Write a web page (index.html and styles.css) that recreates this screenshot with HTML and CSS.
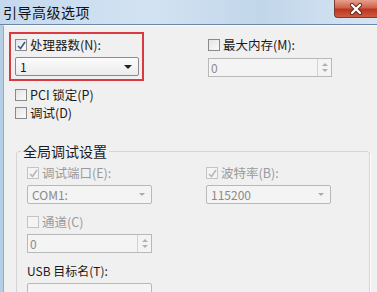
FILE: index.html
```html
<!DOCTYPE html>
<html>
<head>
<meta charset="utf-8">
<link rel="stylesheet" href="styles.css">
</head>
<body>
<div class="window">
  <div class="titlebar">
    <span class="title">引导高级选项</span>
    <div class="close"><svg width="16" height="12" viewBox="0 0 16 12"><path d="M4 2 L12 10 M12 2 L4 10" stroke="#5a2418" stroke-width="4" stroke-linecap="round"/><path d="M4 2 L12 10 M12 2 L4 10" stroke="#fff" stroke-width="2.4" stroke-linecap="round"/></svg></div>
  </div>
  <div class="frame">
    <div class="content">
      <div class="top">
        <div class="col-left">
          <div class="highlight">
            <label class="check"><span class="box checked"><svg width="9" height="9" viewBox="0 0 9 9"><path d="M1 5 L3.5 7.5 L8 1" stroke="#3c5a8c" stroke-width="1.6" fill="none"/></svg></span>处理器数(N):</label>
            <div class="select"><span>1</span><span class="arrow"></span></div>
          </div>
          <label class="check row"><span class="box"></span>PCI 锁定(P)</label>
          <label class="check row"><span class="box"></span>调试(D)</label>
        </div>
        <div class="col-right">
          <label class="check"><span class="box"></span>最大内存(M):</label>
          <div class="spin disabled"><span>0</span><span class="spinbtn"><i class="up"></i><i class="down"></i></span></div>
        </div>
      </div>
      <fieldset class="group">
        <legend>全局调试设置</legend>
        <div class="grid">
          <div class="cell">
            <label class="check dim"><span class="box checked dis"><svg width="9" height="9" viewBox="0 0 9 9"><path d="M1 5 L3.5 7.5 L8 1" stroke="#b8b8b8" stroke-width="1.6" fill="none"/></svg></span>调试端口(E):</label>
            <div class="select disabled"><span>COM1:</span><span class="arrow dim"></span></div>
          </div>
          <div class="cell">
            <label class="check dim"><span class="box checked dis"><svg width="9" height="9" viewBox="0 0 9 9"><path d="M1 5 L3.5 7.5 L8 1" stroke="#b8b8b8" stroke-width="1.6" fill="none"/></svg></span>波特率(B):</label>
            <div class="select disabled"><span>115200</span><span class="arrow dim"></span></div>
          </div>
          <div class="cell">
            <label class="check dim"><span class="box dis"></span>通道(C)</label>
            <div class="spin disabled"><span>0</span><span class="spinbtn"><i class="up"></i><i class="down"></i></span></div>
          </div>
          <div class="cell"></div>
          <div class="cell">
            <label class="check plain">USB 目标名(T):</label>
            <div class="select disabled"></div>
          </div>
        </div>
      </fieldset>
    </div>
  </div>
</div>
</body>
</html>
```
FILE: styles.css
```css
html, body {
  margin: 0;
  padding: 0;
}
body {
  width: 377px;
  height: 292px;
  overflow: hidden;
  font-family: "Noto Sans CJK SC", "DejaVu Sans", sans-serif;
  font-size: 12px;
  color: #1a1a1a;
  background: #f0f0f0;
}
.window {
  width: 377px;
  height: 292px;
  display: flex;
  flex-direction: column;
}
.titlebar {
  height: 24px;
  flex: none;
  display: flex;
  align-items: flex-start;
  justify-content: space-between;
  background: linear-gradient(90deg, #c5d9ee 0%, #d2e2f2 40%, #c2d6ea 70%, #d6e5f3 100%);
  border-bottom: 1px solid #6a86a6;
}
.title {
  font-size: 14px;
  line-height: 24px;
  padding-left: 3px;
  color: #111;
  letter-spacing: 0.5px;
}
.close {
  width: 42px;
  height: 17px;
  border: 1px solid #7a3a30;
  border-top: none;
  border-right: none;
  border-radius: 0 0 0 4px;
  background: linear-gradient(180deg, #e7a08e 0%, #d1624b 45%, #b8371f 55%, #cf5a3e 100%);
  display: flex;
  align-items: center;
  justify-content: center;
}
.frame {
  flex: 1;
  display: flex;
  background: #f0f0f0;
  border-left: 3px solid #b6cde6;
}
.content {
  flex: 1;
  border-left: 1px solid #a7a7a7;
  border-top: 1px solid #fcfcfc;
  padding: 6px 0 0 5px;
}
.top {
  display: flex;
}
.col-left {
  width: 135px;
}
.col-right {
  margin-left: 64px;
  padding-top: 6px;
  width: 124px;
}
.highlight {
  border: 2px solid #d83a40;
  padding: 4px 3px 2px 4px;
  height: 39px;
}
.check {
  display: flex;
  align-items: center;
  gap: 3px;
  height: 14px;
  line-height: 14px;
  font-size: 12.5px;
  white-space: nowrap;
}
.box {
  border: 1px solid #8a8a8a;
  background: linear-gradient(135deg, #e4e4e4, #fbfbfb);
  display: flex;
  align-items: center;
  justify-content: center;
  box-sizing: border-box;
  width: 12px;
  height: 12px;
  flex: none;
}
.box.dis {
  border-color: #c4c4c4;
  background: #f4f4f4;
}
.dim {
  color: #9a9a9a;
}
.row {
  margin-left: 6px;
  margin-top: 4px;
}
.col-left .row:first-of-type {
  margin-top: 7px;
}
.select {
  margin-top: 5px;
  height: 19px;
  box-sizing: border-box;
  border: 1px solid #8a8a8a;
  border-radius: 2px;
  background: linear-gradient(180deg, #fbfbfb, #ececec);
  display: flex;
  align-items: center;
  justify-content: space-between;
  padding: 0 6px 0 4px;
  font-size: 12px;
}
.select.disabled {
  background: #f4f4f4;
  border-color: #b8b8b8;
  color: #8a8a8a;
}
.arrow {
  width: 0;
  height: 0;
  border-left: 4px solid transparent;
  border-right: 4px solid transparent;
  border-top: 4px solid #222;
}
.arrow.dim {
  border-left-width: 3px;
  border-right-width: 3px;
  border-top: 3px solid #aaa;
}
.spin {
  margin-top: 6px;
  height: 19px;
  box-sizing: border-box;
  border: 1px solid #b8b8b8;
  background: #f4f4f4;
  display: flex;
  align-items: center;
  justify-content: space-between;
  padding-left: 2px;
  color: #8a8a8a;
  font-size: 12px;
}
.spinbtn {
  width: 14px;
  height: 17px;
  border-left: 1px solid #d2d2d2;
  display: flex;
  flex-direction: column;
  align-items: center;
  justify-content: space-around;
  padding: 2px 0;
  box-sizing: border-box;
}
.spinbtn i {
  width: 0;
  height: 0;
  border-left: 3px solid transparent;
  border-right: 3px solid transparent;
}
.spinbtn .up { border-bottom: 3px solid #b0b0b0; }
.spinbtn .down { border-top: 3px solid #b0b0b0; }
.group {
  margin: 23px 7px 0 7px;
  border: 1px solid #d5d5d5;
  border-radius: 3px;
  box-shadow: 1px 1px 0 #ffffff;
  padding: 0 0 0 10px;
  height: 160px;
}
.group legend {
  font-size: 14px;
  padding: 0 2px;
  margin-left: -6px;
  line-height: 16px;
  color: #1a1a1a;
}
.grid {
  display: grid;
  grid-template-columns: 125px 125px;
  column-gap: 54px;
  row-gap: 11px;
  padding-top: 7px;
}
.cell .select, .cell .spin {
  margin-top: 5px;
}
.plain {
  font-size: 12px;
  color: #1a1a1a;
}
```
